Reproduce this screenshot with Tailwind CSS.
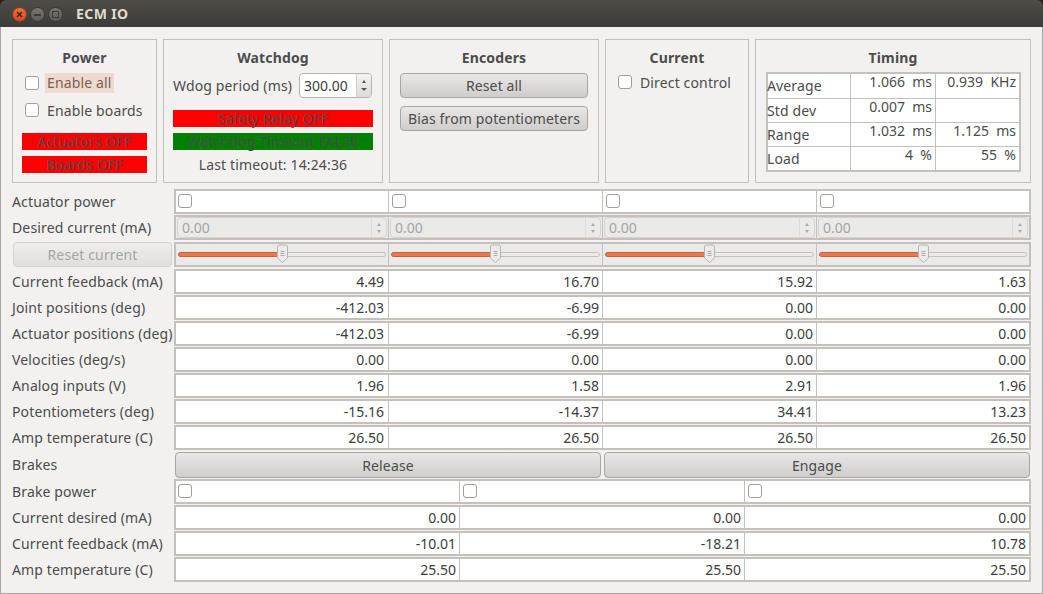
<!DOCTYPE html>
<html lang="en">

<head>
    <meta charset="UTF-8">
    <title>ECM IO</title>
    <script src="https://cdn.jsdelivr.net/npm/@tailwindcss/browser@4"></script>
</head>

<body class="w-[1043px] h-[594px] overflow-hidden bg-[#2c1a20] font-['Noto_Sans',sans-serif] text-[14px] tracking-[0.14px] text-[#4c4c4c]">
    <!-- title bar -->
    <header class="h-[27px] rounded-t-[6px] bg-gradient-to-b from-[#4e4c46] to-[#3c3b37] flex items-center">
        <div class="flex items-center gap-[3px] pl-[12px] pt-[2px]">
            <div class="w-[15px] h-[15px] rounded-full bg-gradient-to-b from-[#f0703a] to-[#d9481e] border border-[#8a3a20] flex items-center justify-center">
                <svg width="7" height="7" viewBox="0 0 7 7"><path d="M1 1l5 5M6 1l-5 5" stroke="#40201a" stroke-width="1.4"/></svg>
            </div>
            <div class="w-[15px] h-[15px] rounded-full bg-gradient-to-b from-[#7a7872] to-[#5b5a55] border border-[#3a3935] flex items-center justify-center">
                <div class="w-[7px] h-[2px] bg-[#3c3b37]"></div>
            </div>
            <div class="w-[15px] h-[15px] rounded-full bg-gradient-to-b from-[#7a7872] to-[#5b5a55] border border-[#3a3935] flex items-center justify-center">
                <div class="w-[7px] h-[7px] border border-[#3c3b37]"></div>
            </div>
        </div>
        <h1 class="ml-[13px] font-bold text-[14px] tracking-[0.4px] text-[#dfdbd2]">ECM IO</h1>
    </header>

    <main class="h-[567px] bg-[#f2f1f0] border-x border-b border-[#a8a6a1] pl-[11px] pr-[11px] pt-[12px]">
        <!-- group boxes -->
        <section class="flex gap-[6px] h-[144px]">
            <div class="w-[145px] border border-[#c4c1bc] px-[9px] pt-[9px]">
                <h2 class="font-bold text-center leading-[18px]">Power</h2>
                <label class="flex items-center h-[28px] mt-[2px] pl-[3px]">
                    <span class="w-[14px] h-[14px] rounded-[3px] border border-[#a09e99] bg-white"></span>
                    <span class="ml-[6px] px-[2px] bg-[#f0d9ce] text-[#7d6055] leading-[20px]">Enable all</span>
                </label>
                <label class="flex items-center h-[28px] -mt-[1px] pl-[3px]">
                    <span class="w-[14px] h-[14px] rounded-[3px] border border-[#a09e99] bg-white"></span>
                    <span class="ml-[8px]">Enable boards</span>
                </label>
                <div class="mt-[9px] h-[17px] bg-[#ff0000] text-center leading-[17px]">Actuators OFF</div>
                <div class="mt-[6px] h-[17px] bg-[#ff0000] text-center leading-[17px]">Boards OFF</div>
            </div>
            <div class="w-[220px] border border-[#c4c1bc] px-[9px] pt-[9px]">
                <h2 class="font-bold text-center leading-[18px]">Watchdog</h2>
                <div class="flex items-center justify-between h-[26px] mt-[5px]">
                    <span>Wdog period (ms)</span>
                    <div class="w-[73px] h-[25px] mr-[1px] rounded-[4px] border border-[#b5b3ae] bg-white flex overflow-hidden">
                        <span class="flex-1 pl-[4px] leading-[23px] tracking-normal text-[#3c3c3c]">300.00</span>
                        <div class="w-[15px] bg-gradient-to-b from-[#f4f3f2] to-[#dcdbd9] border-l border-[#d0cec9] flex flex-col items-center justify-center gap-[5px]">
                            <div class="w-0 h-0 border-x-[2px] border-x-transparent border-b-[3px] border-b-[#555]"></div>
                            <div class="w-0 h-0 border-x-[3px] border-x-transparent border-t-[3px] border-t-[#555]"></div>
                        </div>
                    </div>
                </div>
                <div class="mt-[12px] h-[17px] bg-[#ff0000] text-center leading-[17px]">Safety Relay OFF</div>
                <div class="mt-[6px] h-[17px] bg-[#008000] text-center leading-[17px]">Watchdog Timeout FALSE</div>
                <div class="mt-[6px] text-center leading-[17px]">Last timeout: 14:24:36</div>
            </div>
            <div class="w-[210px] border border-[#c4c1bc] px-[10px] pt-[9px]">
                <h2 class="font-bold text-center leading-[18px]">Encoders</h2>
                <button class="mt-[6px] w-full h-[25px] rounded-[4px] border border-[#a8a6a1] bg-gradient-to-b from-[#e8e7e6] to-[#cfcecc]">Reset all</button>
                <button class="mt-[8px] w-full h-[25px] rounded-[4px] border border-[#a8a6a1] bg-gradient-to-b from-[#e8e7e6] to-[#cfcecc]">Bias from potentiometers</button>
            </div>
            <div class="w-[144px] border border-[#c4c1bc] px-[12px] pt-[9px]">
                <h2 class="font-bold text-center leading-[18px]">Current</h2>
                <label class="flex items-center h-[20px] mt-[5px]">
                    <span class="w-[14px] h-[14px] rounded-[3px] border border-[#a09e99] bg-white"></span>
                    <span class="ml-[8px]">Direct control</span>
                </label>
            </div>
            <div class="w-[276px] border border-[#c4c1bc] px-[10px] pt-[9px]">
                <h2 class="font-bold text-center leading-[18px]">Timing</h2>
                <div class="mt-[5px] w-[255px] h-[100px] border-2 border-[#c4c1bc] bg-white grid grid-cols-[82px_85px_84px] grid-rows-4 tracking-normal">
                    <div class="-ml-[1px] tracking-[0.14px] leading-[24px]">Average</div>
                    <div class="border-l border-[#c4c1bc] text-right pr-[3px] leading-[16px]">1.066 &nbsp;ms</div>
                    <div class="border-l border-[#c4c1bc] text-right pr-[3px] leading-[16px]">0.939 &nbsp;KHz</div>
                    <div class="border-t border-[#c4c1bc] -ml-[1px] tracking-[0.14px] leading-[24px]">Std dev</div>
                    <div class="border-t border-l border-[#c4c1bc] text-right pr-[3px] leading-[16px]">0.007 &nbsp;ms</div>
                    <div class="border-t border-l border-[#c4c1bc]"></div>
                    <div class="border-t border-[#c4c1bc] -ml-[1px] tracking-[0.14px] leading-[24px]">Range</div>
                    <div class="border-t border-l border-[#c4c1bc] text-right pr-[3px] leading-[16px]">1.032 &nbsp;ms</div>
                    <div class="border-t border-l border-[#c4c1bc] text-right pr-[3px] leading-[16px]">1.125 &nbsp;ms</div>
                    <div class="border-t border-[#c4c1bc] -ml-[1px] tracking-[0.14px] leading-[24px]">Load</div>
                    <div class="border-t border-l border-[#c4c1bc] text-right pr-[3px] leading-[16px]">4 &nbsp;%</div>
                    <div class="border-t border-l border-[#c4c1bc] text-right pr-[3px] leading-[16px]">55 &nbsp;%</div>
                </div>
            </div>
        </section>

        <!-- joint rows, filled in below -->
        <section id="rows" class="mt-[6px] flex flex-col"></section>
    </main>

    <script>
        const frame4 = 'w-[857px] h-[25px] border-2 border-[#c4c1bc] grid grid-cols-[212px_214px_214px_213px]'
        const frame3 = 'w-[857px] h-[25px] border-2 border-[#c4c1bc] grid grid-cols-[283px_285px_285px]'

        function label(text) {
            return `<div class="w-[162px] shrink-0 leading-[25px]">${text}</div>`
        }
        function cells(items, render) {
            return items.map((v, i) => `<div class="min-w-0 ${i ? 'border-l border-[#c4c1bc]' : ''}">${render(v, i)}</div>`).join('')
        }
        function numbers(name, values) {
            const frame = values.length == 4 ? frame4 : frame3
            const first = values.length == 4 ? 'pr-[4px]' : 'pr-[3px]'
            return `<div class="flex h-[26px]">${label(name)}<div class="${frame} bg-white">${cells(values, (v, i) => `<div class="text-right ${i ? 'pr-[3px]' : first} leading-[21px] tracking-normal text-[#3c3c3c]">${v}</div>`)}</div></div>`
        }
        function checks(name, n) {
            const frame = n == 4 ? frame4 : frame3
            return `<div class="flex h-[26px]">${label(name)}<div class="${frame} bg-white">${cells(Array(n).fill(0), (v, i) => `<span class="block w-[14px] h-[14px] ${i ? 'ml-[3px]' : 'ml-[2px]'} mt-[3px] rounded-[3px] border border-[#a09e99] bg-white"></span>`)}</div></div>`
        }
        function spin() {
            return `<div class="h-[21px] mx-[1px] rounded-[4px] border border-[#d5d3cf] bg-[#eaeae9] flex">
                <span class="flex-1 pl-[4px] leading-[19px] tracking-normal text-[#a5a5a3]">0.00</span>
                <div class="w-[15px] border-l border-[#dddbd7] flex flex-col items-center justify-center gap-[4px]">
                    <div class="w-0 h-0 border-x-[2px] border-x-transparent border-b-[3px] border-b-[#aaa]"></div>
                    <div class="w-0 h-0 border-x-[2px] border-x-transparent border-t-[3px] border-t-[#aaa]"></div>
                </div></div>`
        }
        function slider() {
            return `<div class="relative h-[21px]">
                <div class="absolute left-[2px] right-[2px] top-[8px] h-[5px] rounded-full bg-[#ecebe9] border border-[#c4c1bc]"></div>
                <div class="absolute left-[2px] w-[101px] top-[8px] h-[5px] rounded-full bg-[#e9784f] border border-[#c9623c]"></div>
                <svg class="absolute left-[100px] top-0" width="13" height="20" viewBox="0 0 13 20"><path d="M1.5 3a2 2 0 0 1 2-2h6a2 2 0 0 1 2 2v11l-5 4.5-5-4.5z" fill="#ecebe9" stroke="#b8b6b1"/><path d="M4.5 7.5h4M4.5 9.5h4M4.5 11.5h4" stroke="#b0aeaa"/></svg>
                </div>`
        }

        let html = ''
        html += checks('Actuator power', 4)
        html += `<div class="flex h-[27px]">${label('Desired current (mA)')}<div class="${frame4} bg-[#eaeae9]">${cells([0, 0, 0, 0], spin)}</div></div>`
        html += `<div class="flex h-[27px]"><div class="w-[162px] shrink-0 pl-[1px] pr-[2px]"><button class="w-full h-[25px] rounded-[4px] border border-[#d5d3cf] bg-gradient-to-b from-[#efeeed] to-[#e0dfde] text-[#a5a5a3]">Reset current</button></div><div class="${frame4} bg-[#eaeae9]">${cells([0, 0, 0, 0], slider)}</div></div>`
        html += numbers('Current feedback (mA)', ['4.49', '16.70', '15.92', '1.63'])
        html += numbers('Joint positions (deg)', ['-412.03', '-6.99', '0.00', '0.00'])
        html += numbers('Actuator positions (deg)', ['-412.03', '-6.99', '0.00', '0.00'])
        html += numbers('Velocities (deg/s)', ['0.00', '0.00', '0.00', '0.00'])
        html += numbers('Analog inputs (V)', ['1.96', '1.58', '2.91', '1.96'])
        html += numbers('Potentiometers (deg)', ['-15.16', '-14.37', '34.41', '13.23'])
        html += numbers('Amp temperature (C)', ['26.50', '26.50', '26.50', '26.50'])
        html += `<div class="flex h-[27px] mt-[1px]">${label('Brakes')}<div class="w-[857px] px-[1px] flex gap-[3px]">
            <button class="flex-1 h-[26px] rounded-[4px] border border-[#a8a6a1] bg-gradient-to-b from-[#e8e7e6] to-[#cfcecc]">Release</button>
            <button class="flex-1 h-[26px] rounded-[4px] border border-[#a8a6a1] bg-gradient-to-b from-[#e8e7e6] to-[#cfcecc]">Engage</button></div></div>`
        html += checks('Brake power', 3)
        html += numbers('Current desired (mA)', ['0.00', '0.00', '0.00'])
        html += numbers('Current feedback (mA)', ['-10.01', '-18.21', '10.78'])
        html += numbers('Amp temperature (C)', ['25.50', '25.50', '25.50'])
        document.querySelector('#rows').innerHTML = html
    </script>
</body>

</html>
